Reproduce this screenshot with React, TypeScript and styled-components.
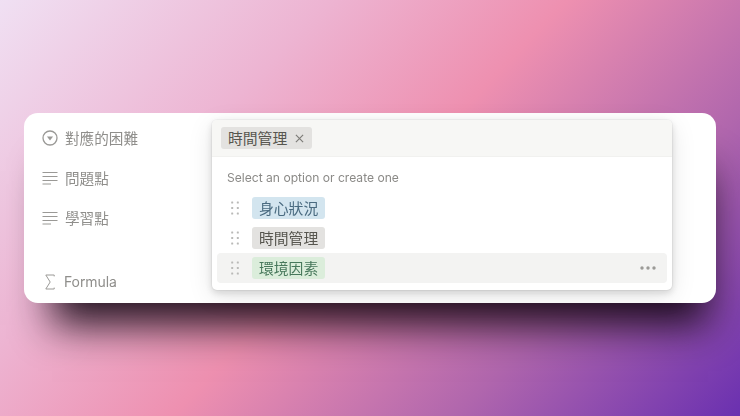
import React from "react";
import styled, { createGlobalStyle } from "styled-components";

const Global = createGlobalStyle`
  html, body { margin: 0; padding: 0; width: 740px; height: 416px; overflow: hidden; }
  #root { width: 740px; height: 416px; }
`;

const Stage = styled.div`
  box-sizing: border-box;
  width: 740px;
  height: 416px;
  padding: 113px 24px;
  background: linear-gradient(133.5deg, #f0e0f3 0%, #edb4d2 29%, #ee90b0 50%, #b066ad 75%, #6a30b0 100%);
  font-family: "Noto Sans CJK TC", "Noto Sans", sans-serif;
`;

const Card = styled.div`
  position: relative;
  height: 190px;
  box-sizing: border-box;
  padding: 5px 0 0 18px;
  border-radius: 14px;
  background: #fff;
  box-shadow: 10px 40px 38px -18px rgba(20, 8, 20, 0.92);
  filter: blur(0.4px);
`;

const PropertyList = styled.div`
  display: flex;
  flex-direction: column;
  width: 170px;
`;

const PropertyRow = styled.div<{ $gapTop?: number }>`
  display: flex;
  align-items: center;
  gap: 7px;
  height: 40px;
  margin-top: ${(p) => p.$gapTop ?? 0}px;
  color: #8f8e8b;
  font-size: 14.6px;
  line-height: 20px;
`;

const IconSlot = styled.span`
  display: flex;
  align-items: center;
  justify-content: center;
  width: 16px;
  height: 16px;
  color: #9a9996;
  flex: none;
`;

const FormulaLabel = styled.span`
  margin-left: -1px;
  font-family: "Inter", "Noto Sans", sans-serif;
  font-size: 14px;
  letter-spacing: -0.1px;
`;

const Popup = styled.div`
  position: absolute;
  left: 188px;
  top: 7px;
  width: 460px;
  height: 170px;
  border-radius: 5px;
  background: #fff;
  overflow: hidden;
  box-shadow: 0 0 0 1px rgba(15, 15, 15, 0.03), 0 3px 7px rgba(15, 15, 15, 0.14), 0 6px 26px rgba(15, 15, 15, 0.1);
`;

const Header = styled.div`
  display: flex;
  align-items: center;
  box-sizing: border-box;
  height: 37px;
  padding: 0 9px;
  background: #f7f7f5;
  border-bottom: 1px solid #f1f1ef;
`;

const Tag = styled.span<{ $bg: string; $fg: string }>`
  display: inline-flex;
  align-items: center;
  height: 22px;
  padding: 0 7px;
  border-radius: 3px;
  background: ${(p) => p.$bg};
  color: ${(p) => p.$fg};
  font-size: 14.8px;
  line-height: 22px;
`;

const SelectedTag = styled(Tag)`
  gap: 8px;
  padding-right: 8px;
`;

const CloseIcon = styled.svg`
  width: 9px;
  height: 9px;
  color: #7d7c78;
`;

const Hint = styled.div`
  padding: 12px 15px 0;
  height: 20px;
  color: #8b8a87;
  font-family: "Inter", "Noto Sans", sans-serif;
  font-size: 12.1px;
  line-height: 18px;
`;

const Options = styled.div`
  display: flex;
  flex-direction: column;
  margin-top: 4px;
  padding: 0 5px;
`;

const Option = styled.div<{ $active?: boolean }>`
  display: flex;
  align-items: center;
  gap: 10px;
  box-sizing: border-box;
  height: 30px;
  padding: 0 9px 0 13px;
  border-radius: 4px;
  background: ${(p) => (p.$active ? "#f3f3f2" : "transparent")};
`;

const Spacer = styled.span`
  flex: 1;
`;

const Dots = styled.svg`
  width: 10px;
  height: 14px;
  color: #b9b9b7;
  flex: none;
  margin-right: 2px;
`;

const More = styled.svg`
  width: 16px;
  height: 4px;
  margin-right: 2px;
  color: #9b9a97;
`;

const Grip = () => (
  <Dots viewBox="0 0 10 14" fill="currentColor">
    {[1.5, 7, 12.5].map((y) => (
      <React.Fragment key={y}>
        <rect x="1.2" y={y - 1} width="2" height="2" rx="0.5" />
        <rect x="6.8" y={y - 1} width="2" height="2" rx="0.5" />
      </React.Fragment>
    ))}
  </Dots>
);

const LinesIcon = () => (
  <svg width="16" height="14" viewBox="0 0 16 14" stroke="currentColor" strokeWidth="1.1" fill="none">
    <path d="M0.5 1.5H15.5M0.5 5.5H15.5M0.5 9.5H15.5M0.5 13H9" />
  </svg>
);

const SelectIcon = () => (
  <svg width="16" height="16" viewBox="0 0 16 16" fill="none">
    <circle cx="8" cy="8" r="7" stroke="currentColor" strokeWidth="1.3" />
    <path d="M4.9 6.6H11.1L8 10.4Z" fill="currentColor" />
  </svg>
);

const SigmaIcon = () => (
  <svg width="10" height="16" viewBox="0 0 10 16" fill="none" stroke="currentColor" strokeWidth="1">
    <path d="M9.2 2.4V1H0.8L5.2 8L0.8 15H9.2V13.6" />
  </svg>
);

const options = [
  { label: "身心狀況", bg: "#d3e5ef", fg: "#4a6b80" },
  { label: "時間管理", bg: "#e3e2e0", fg: "#57564f" },
  { label: "環境因素", bg: "#dbeddb", fg: "#47785b", active: true },
];

export default function App() {
  return (
    <Stage>
      <Global />
      <Card>
        <PropertyList>
          <PropertyRow>
            <IconSlot><SelectIcon /></IconSlot>
            對應的困難
          </PropertyRow>
          <PropertyRow>
            <IconSlot><LinesIcon /></IconSlot>
            問題點
          </PropertyRow>
          <PropertyRow>
            <IconSlot><LinesIcon /></IconSlot>
            學習點
          </PropertyRow>
          <PropertyRow $gapTop={24}>
            <IconSlot><SigmaIcon /></IconSlot>
            <FormulaLabel>Formula</FormulaLabel>
          </PropertyRow>
        </PropertyList>
        <Popup>
          <Header>
            <SelectedTag $bg="#e3e2e0" $fg="#57564f">
              時間管理
              <CloseIcon viewBox="0 0 10 10" stroke="currentColor" strokeWidth="1.3" fill="none">
                <path d="M1 1L9 9M9 1L1 9" />
              </CloseIcon>
            </SelectedTag>
          </Header>
          <Hint>Select an option or create one</Hint>
          <Options>
            {options.map((o) => (
              <Option key={o.label} $active={o.active}>
                <Grip />
                <Tag $bg={o.bg} $fg={o.fg}>{o.label}</Tag>
                <Spacer />
                {o.active && (
                  <More viewBox="0 0 16 4" fill="currentColor">
                    <circle cx="2" cy="2" r="1.7" />
                    <circle cx="8" cy="2" r="1.7" />
                    <circle cx="14" cy="2" r="1.7" />
                  </More>
                )}
              </Option>
            ))}
          </Options>
        </Popup>
      </Card>
    </Stage>
  );
}
